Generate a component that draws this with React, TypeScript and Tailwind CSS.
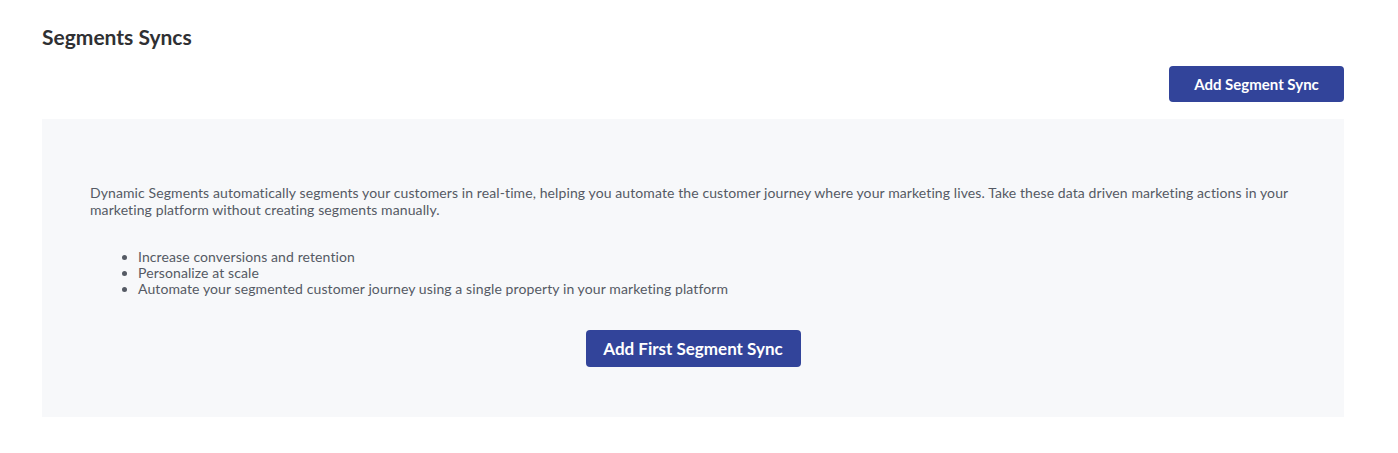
import React from 'react';

const App: React.FC = () => {
  return (
    <div className="min-h-screen bg-white pl-[42px] pr-[54px] pt-[23px] pb-10" style={{ fontFamily: 'Lato, "Noto Sans", sans-serif' }}>
      <h1 className="text-[21px] font-bold leading-[27px] text-[#2f3033]">Segments Syncs</h1>

      <div className="mt-[16px] flex justify-end">
        <button className="h-[36px] w-[175px] rounded-[4px] bg-[#32449a] text-[15px] font-bold text-white">
          Add Segment Sync
        </button>
      </div>

      <div className="mt-[17px] bg-[#f7f8fa] px-[48px] pt-[65px] pb-[50px]">
        <p className="text-[14px] leading-[17px] tracking-[0.1px] text-[#555a64]">
          Dynamic Segments automatically segments your customers in real-time, helping you automate the customer journey where your marketing lives. Take these data driven marketing actions in your marketing platform without creating segments manually.
        </p>

        <ul className="mt-[31px] list-disc pl-[48px] text-[14px] leading-[16px] tracking-[0.1px] text-[#555a64]">
          <li>Increase conversions and retention</li>
          <li>Personalize at scale</li>
          <li>Automate your segmented customer journey using a single property in your marketing platform</li>
        </ul>

        <div className="mt-[33px] flex justify-center">
          <button className="h-[37px] w-[215px] rounded-[4px] bg-[#32449a] text-[17px] font-bold text-white">
            Add First Segment Sync
          </button>
        </div>
      </div>
    </div>
  );
};

export default App;
